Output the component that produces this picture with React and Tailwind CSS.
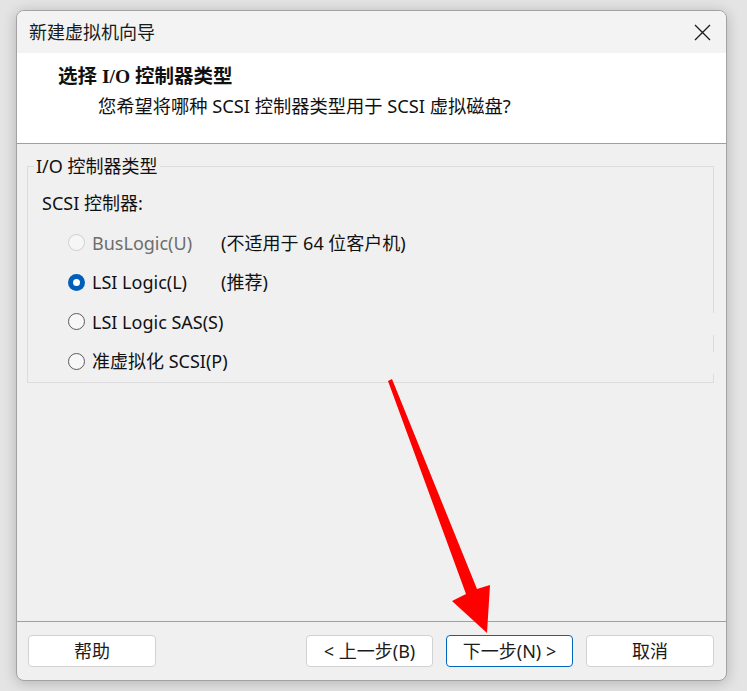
import React from 'react';

const Radio = ({ checked, disabled }) => {
  if (checked) {
    return (
      <span className="w-[17px] h-[17px] shrink-0 rounded-full bg-[#005fb8] flex items-center justify-center">
        <span className="w-[7px] h-[7px] rounded-full bg-white"></span>
      </span>
    );
  }
  return (
    <span
      className={
        disabled
          ? 'w-[17px] h-[17px] shrink-0 rounded-full border border-[#cfcfcf] bg-[#f6f6f6]'
          : 'w-[17px] h-[17px] shrink-0 rounded-full border border-[#5a5a5a] bg-[#f7f7f7]'
      }
    ></span>
  );
};

const Option = ({ label, note, checked, disabled }) => (
  <div className="h-[39.5px] flex items-center whitespace-nowrap">
    <div className="w-[153px] shrink-0 flex items-center gap-[7px]">
      <Radio checked={checked} disabled={disabled} />
      <span className={disabled ? 'text-[#6d6d6d]' : 'text-[#111]'}>{label}</span>
    </div>
    {note && <span className="text-[#111]">{note}</span>}
  </div>
);

const Button = ({ children, primary, narrow }) => (
  <button
    className={clsxLike(
      narrow ? 'w-[127px]' : 'w-[128px]',
      'h-[32px] rounded-[4px] border bg-white text-[#1b1b1b]',
      primary ? 'border-[#0067c0]' : 'border-[#d2d2d2]'
    )}
  >
    {children}
  </button>
);

function clsxLike(...parts) {
  return parts.filter(Boolean).join(' ');
}

export default function App() {
  return (
    <div
      className="relative w-[747px] h-[691px] bg-[#e4e4e4] pt-[10px] pl-[16px] text-[18px] leading-none"
      style={{ fontFamily: '"Noto Sans", "Noto Sans CJK SC", sans-serif' }}
    >
      <div className="w-[711px] h-[671px] rounded-[8px] border border-[#a3a3a3] overflow-hidden flex flex-col bg-[#f0f0f0] shadow-[0_2px_14px_rgba(0,0,0,0.22)]">
        {/* title bar */}
        <div className="h-[42px] bg-[#f3f3f3] flex items-center justify-between pl-[12px] pr-[15px]">
          <span className="text-[#1a1a1a] text-[18px]">新建虚拟机向导</span>
          <svg width="17" height="17" viewBox="0 0 17 17">
            <path d="M1 1 L16 16 M16 1 L1 16" stroke="#1a1a1a" strokeWidth="1.3" fill="none" />
          </svg>
        </div>

        {/* header */}
        <div className="h-[91px] bg-white border-b border-[#a0a0a0] pl-[41px] pt-[14px]">
          <div
            className="font-bold text-[#111] text-[19.5px]"
            style={{ fontFamily: '"Liberation Serif", "Noto Sans CJK SC", serif' }}
          >
            选择 I/O 控制器类型
          </div>
          <div className="pl-[40px] mt-[10px] text-[#111] text-[18.25px] whitespace-nowrap">
            您希望将哪种 SCSI 控制器类型用于 SCSI 虚拟磁盘?
          </div>
        </div>

        {/* body */}
        <div className="flex-1 pl-[10px] pr-[12px] pt-[13px]">
          <fieldset className="relative border border-[#dcdcdc] h-[226px]">
            <legend className="ml-[6px] px-[2px] text-[#111] text-[18px]">I/O 控制器类型</legend>
            <div className="absolute right-[-1px] top-[138px] w-[2px] h-[22px] bg-[#f0f0f0]"></div>
            <div className="absolute right-[-1px] top-[177px] w-[2px] h-[22px] bg-[#f0f0f0]"></div>
            <div className="pl-[14px] pt-[19px] text-[#111]">SCSI 控制器:</div>
            <div className="pl-[40px] pt-[11px]">
              <Option label="BusLogic(U)" note="(不适用于 64 位客户机)" disabled />
              <Option label="LSI Logic(L)" note="(推荐)" checked />
              <Option label="LSI Logic SAS(S)" />
              <Option label="准虚拟化 SCSI(P)" />
            </div>
          </fieldset>
        </div>

        {/* footer */}
        <div className="h-[59px] border-t border-[#a0a0a0] flex items-start pt-[13px] pl-[11px] pr-[12px]">
          <Button>帮助</Button>
          <div className="flex-1"></div>
          <div className="flex gap-[13px]">
            <Button narrow>&lt; 上一步(B)</Button>
            <Button narrow primary>下一步(N) &gt;</Button>
            <Button>取消</Button>
          </div>
        </div>
      </div>

      {/* annotation arrow */}
      <svg className="absolute left-0 top-0 pointer-events-none" width="747" height="691" viewBox="0 0 747 691">
        <polygon
          points="388,381 392,379 477,589 490,585 487,633 452,601 466,594"
          fill="#ff0000"
        />
      </svg>
    </div>
  );
}
